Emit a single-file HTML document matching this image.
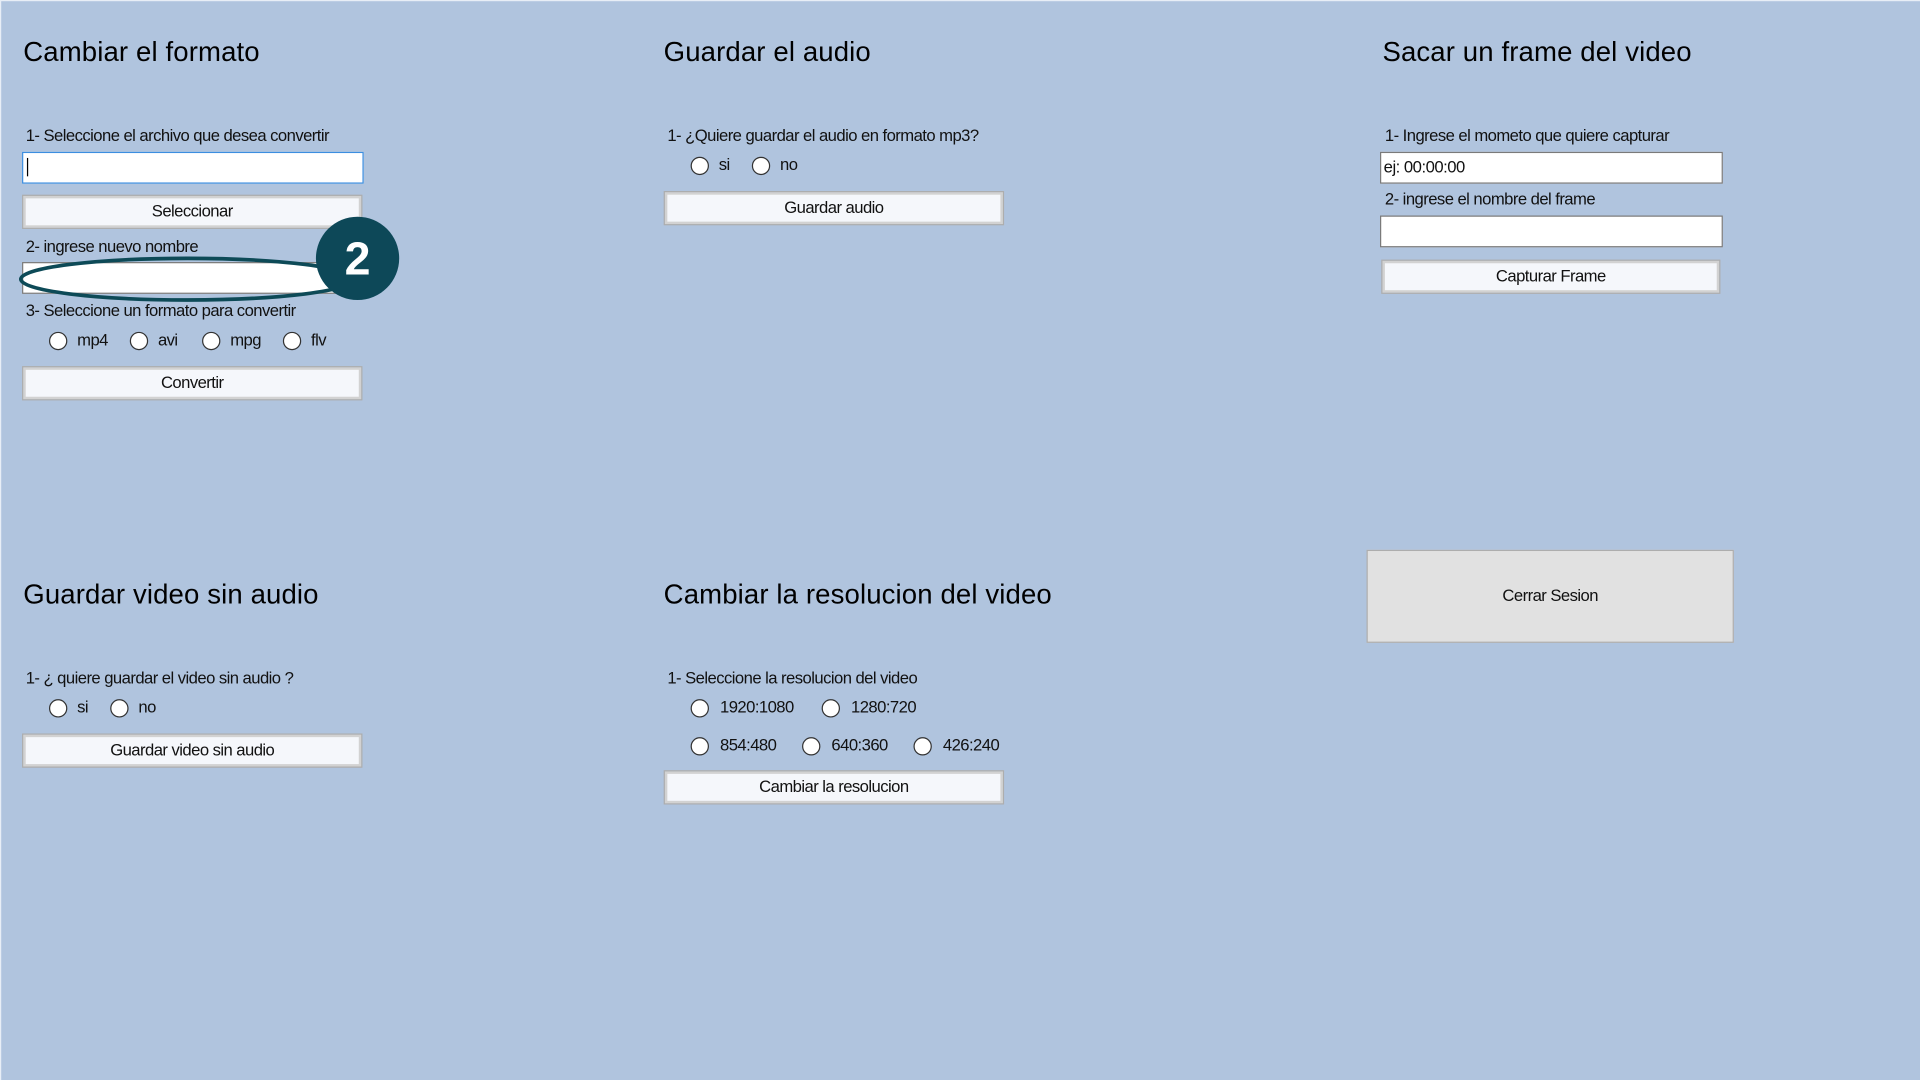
<!DOCTYPE html>
<html><head><meta charset="utf-8"><style>
html,body{margin:0;padding:0;width:1920px;height:1080px;overflow:hidden;background:#b0c4de;}
#w{position:absolute;left:0;top:0;width:1568px;height:882px;transform:scale(1.22449);transform-origin:0 0;background:#b0c4de;border-left:1px solid #e8eef6;border-top:1px solid #e8eef6;box-sizing:border-box;font-family:"Liberation Sans",sans-serif;color:#111;}
.a{position:absolute;white-space:nowrap;}
.t{font-size:22.5px;color:#000;letter-spacing:0.1px;}
.l{font-size:13.6px;letter-spacing:-0.45px;}
.tb{position:absolute;background:#fff;border:1px solid #7a7a7a;box-sizing:border-box;height:26px;font-size:13.6px;letter-spacing:-0.4px;padding:4px 2px;}
.bt{position:absolute;background:#f5f7fb;border:2px solid #d2d2d2;outline:1px solid #adadad;box-sizing:border-box;height:26px;font-size:13.6px;letter-spacing:-0.45px;text-align:center;line-height:22px;}
.r{position:absolute;width:15px;height:15px;border:1.3px solid #333;border-radius:50%;background:#fff;box-sizing:border-box;}
</style></head><body><div id="w">
<div class="a t" style="left:18px;top:29px">Cambiar el formato</div>
<div class="a l" style="left:20px;top:102px">1- Seleccione el archivo que desea convertir</div>
<div class="tb" style="left:17px;top:123px;width:279px;border:1.5px solid #3c8ee0"><span style="display:inline-block;width:1px;height:15px;background:#000;margin-left:1px"></span></div>
<div class="bt" style="left:18px;top:159px;width:276px">Seleccionar</div>
<div class="a l" style="left:20px;top:193px">2- ingrese nuevo nombre</div>
<div class="tb" style="left:17px;top:213px;width:279px"></div>
<div class="a l" style="left:20px;top:245px">3- Seleccione un formato para convertir</div>
<div class="r" style="left:39px;top:270px"></div><div class="a l" style="left:62px;top:269px">mp4</div>
<div class="r" style="left:105px;top:270px"></div><div class="a l" style="left:128px;top:269px">avi</div>
<div class="r" style="left:164px;top:270px"></div><div class="a l" style="left:187px;top:269px">mpg</div>
<div class="r" style="left:230px;top:270px"></div><div class="a l" style="left:253px;top:269px">flv</div>
<div class="bt" style="left:18px;top:299px;width:276px">Convertir</div>
<svg class="a" style="left:0;top:160px" width="340" height="110"><ellipse cx="152" cy="67" rx="136" ry="17" fill="none" stroke="#0d4a57" stroke-width="3"/><circle cx="291" cy="50" r="34" fill="#0d4858"/><text x="291" y="63" font-family="Liberation Sans,sans-serif" font-size="38" font-weight="bold" fill="#fff" text-anchor="middle">2</text></svg>

<div class="a t" style="left:541px;top:29px">Guardar el audio</div>
<div class="a l" style="left:544px;top:102px">1- ¿Quiere guardar el audio en formato mp3?</div>
<div class="r" style="left:563px;top:127px"></div><div class="a l" style="left:586px;top:126px">si</div>
<div class="r" style="left:613px;top:127px"></div><div class="a l" style="left:636px;top:126px">no</div>
<div class="bt" style="left:542px;top:156px;width:276px">Guardar audio</div>

<div class="a t" style="left:1128px;top:29px">Sacar un frame del video</div>
<div class="a l" style="left:1130px;top:102px">1- Ingrese el mometo que quiere capturar</div>
<div class="tb" style="left:1126px;top:123px;width:280px">ej: 00:00:00</div>
<div class="a l" style="left:1130px;top:154px">2- ingrese el nombre del frame</div>
<div class="tb" style="left:1126px;top:175px;width:280px"></div>
<div class="bt" style="left:1128px;top:212px;width:275px">Capturar Frame</div>

<div class="a t" style="left:18px;top:472px">Guardar video sin audio</div>
<div class="a l" style="left:20px;top:545px">1- ¿ quiere guardar el video sin audio ?</div>
<div class="r" style="left:39px;top:570px"></div><div class="a l" style="left:62px;top:569px">si</div>
<div class="r" style="left:89px;top:570px"></div><div class="a l" style="left:112px;top:569px">no</div>
<div class="bt" style="left:18px;top:599px;width:276px">Guardar video sin audio</div>

<div class="a t" style="left:541px;top:472px">Cambiar la resolucion del video</div>
<div class="a l" style="left:544px;top:545px">1- Seleccione la resolucion del video</div>
<div class="r" style="left:563px;top:570px"></div><div class="a l" style="left:587px;top:569px">1920:1080</div>
<div class="r" style="left:670px;top:570px"></div><div class="a l" style="left:694px;top:569px">1280:720</div>
<div class="r" style="left:563px;top:601px"></div><div class="a l" style="left:587px;top:600px">854:480</div>
<div class="r" style="left:654px;top:601px"></div><div class="a l" style="left:678px;top:600px">640:360</div>
<div class="r" style="left:745px;top:601px"></div><div class="a l" style="left:769px;top:600px">426:240</div>
<div class="bt" style="left:542px;top:629px;width:276px">Cambiar la resolucion</div>

<div class="a l" style="left:1115px;top:448px;width:300px;height:76px;background:#e1e1e1;border:1px solid #adadad;box-sizing:border-box;text-align:center;line-height:74px">Cerrar Sesion</div>
</div></body></html>
